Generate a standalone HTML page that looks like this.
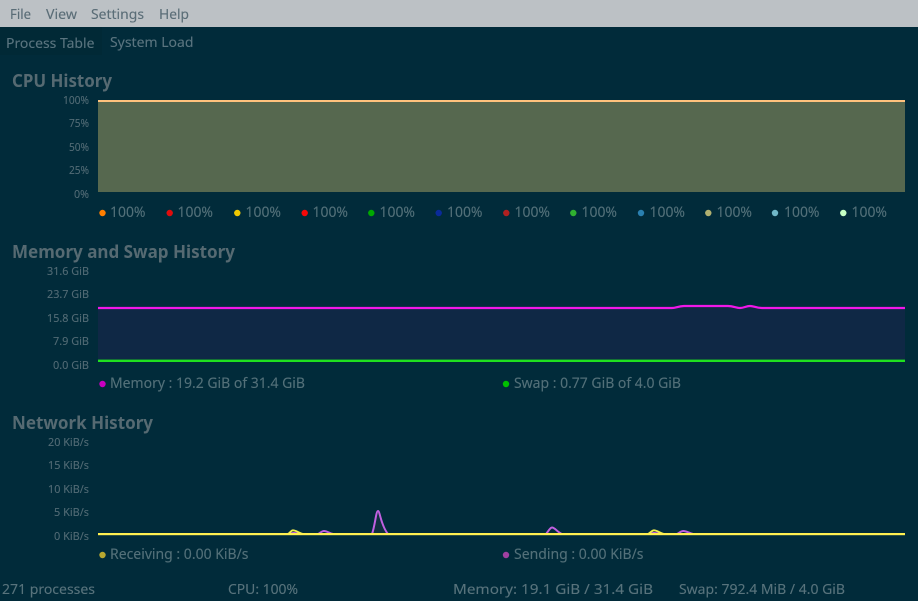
<!DOCTYPE html>
<html lang="en">
<head>
<meta charset="utf-8">
<title>System Load</title>
<style>
html,body{margin:0;padding:0;width:918px;height:601px;overflow:hidden;background:#012b3a}
svg{display:block;position:absolute;left:0;top:0}
text{font-family:"Noto Sans","DejaVu Sans","Liberation Sans",sans-serif;white-space:pre}
.m{font-size:14px;fill:#5a6d77;stroke:#5a6d77;stroke-width:.12}
.t{font-size:14px;fill:#5a747f;stroke:#5a747f;stroke-width:.12}
.h{font-size:18px;font-weight:bold;fill:#566a72}
.a{font-size:10.6px;fill:#526b75;stroke:#526b75;stroke-width:.1}
.l{font-size:14.1px;fill:#537079;stroke:#537079;stroke-width:.12}
.s{font-size:14px;fill:#58737c;stroke:#58737c;stroke-width:.12}
</style>
</head>
<body>
<svg width="918" height="601" viewBox="0 0 918 601" xmlns="http://www.w3.org/2000/svg">
<rect width="918" height="601" fill="#012b3a"/>
<rect width="918" height="27" fill="#bcc1c5"/>
<text class="m" x="10" y="19" textLength="21" lengthAdjust="spacingAndGlyphs">File</text>
<text class="m" x="46" y="19" textLength="31" lengthAdjust="spacingAndGlyphs">View</text>
<text class="m" x="91" y="19" textLength="53" lengthAdjust="spacingAndGlyphs">Settings</text>
<text class="m" x="159" y="19" textLength="30" lengthAdjust="spacingAndGlyphs">Help</text>

<rect x="0" y="27" width="102" height="28" fill="#012936"/>
<text class="t" x="6" y="48" textLength="88.5" lengthAdjust="spacingAndGlyphs">Process Table</text>
<text class="t" x="110" y="47" textLength="83.5" lengthAdjust="spacingAndGlyphs">System Load</text>

<!-- CPU -->
<text class="h" x="12" y="87" textLength="100" lengthAdjust="spacingAndGlyphs">CPU History</text>
<text class="a" x="63" y="104" textLength="26" lengthAdjust="spacingAndGlyphs">100%</text>
<text class="a" x="69" y="127" textLength="20" lengthAdjust="spacingAndGlyphs">75%</text>
<text class="a" x="69" y="151" textLength="20" lengthAdjust="spacingAndGlyphs">50%</text>
<text class="a" x="69" y="174" textLength="20" lengthAdjust="spacingAndGlyphs">25%</text>
<text class="a" x="74" y="198" textLength="15" lengthAdjust="spacingAndGlyphs">0%</text>
<rect x="98" y="102" width="807" height="90" fill="#56684f"/>
<rect x="98" y="100" width="807" height="2" fill="#ffc27d"/>

<circle cx="102.5" cy="213" r="3.2" fill="#ff7f00"/><text class="l" x="110" y="217" textLength="35.5" lengthAdjust="spacingAndGlyphs">100%</text>
<circle cx="169.7" cy="213" r="3.2" fill="#e00c0c"/><text class="l" x="177.5" y="217" textLength="35.5" lengthAdjust="spacingAndGlyphs">100%</text>
<circle cx="237.3" cy="213" r="3.2" fill="#f0c800"/><text class="l" x="245.5" y="217" textLength="35.5" lengthAdjust="spacingAndGlyphs">100%</text>
<circle cx="304.7" cy="213" r="3.2" fill="#f80808"/><text class="l" x="312.5" y="217" textLength="35.5" lengthAdjust="spacingAndGlyphs">100%</text>
<circle cx="371.3" cy="213" r="3.2" fill="#00a800"/><text class="l" x="379.5" y="217" textLength="35.5" lengthAdjust="spacingAndGlyphs">100%</text>
<circle cx="438.7" cy="213" r="3.2" fill="#0a2a9a"/><text class="l" x="447" y="217" textLength="35.5" lengthAdjust="spacingAndGlyphs">100%</text>
<circle cx="506.3" cy="213" r="3.2" fill="#b02020"/><text class="l" x="514.5" y="217" textLength="35.5" lengthAdjust="spacingAndGlyphs">100%</text>
<circle cx="573.3" cy="213" r="3.2" fill="#30b030"/><text class="l" x="581.5" y="217" textLength="35.5" lengthAdjust="spacingAndGlyphs">100%</text>
<circle cx="641" cy="213" r="3.2" fill="#2a80b0"/><text class="l" x="649.5" y="217" textLength="35.5" lengthAdjust="spacingAndGlyphs">100%</text>
<circle cx="708.3" cy="213" r="3.2" fill="#b0b070"/><text class="l" x="716.5" y="217" textLength="35.5" lengthAdjust="spacingAndGlyphs">100%</text>
<circle cx="775" cy="213" r="3.2" fill="#70b8c8"/><text class="l" x="784" y="217" textLength="35.5" lengthAdjust="spacingAndGlyphs">100%</text>
<circle cx="843.3" cy="213" r="3.2" fill="#c4ffc4"/><text class="l" x="851.5" y="217" textLength="35.5" lengthAdjust="spacingAndGlyphs">100%</text>

<!-- Memory -->
<text class="h" x="12" y="258" textLength="223" lengthAdjust="spacingAndGlyphs">Memory and Swap History</text>
<text class="a" x="47" y="275" textLength="42" lengthAdjust="spacingAndGlyphs">31.6 GiB</text>
<text class="a" x="47" y="298" textLength="42" lengthAdjust="spacingAndGlyphs">23.7 GiB</text>
<text class="a" x="47" y="322" textLength="42" lengthAdjust="spacingAndGlyphs">15.8 GiB</text>
<text class="a" x="53" y="345" textLength="36" lengthAdjust="spacingAndGlyphs">7.9 GiB</text>
<text class="a" x="53" y="369" textLength="36" lengthAdjust="spacingAndGlyphs">0.0 GiB</text>
<path d="M98 308H672C676 308 678 306.2 684 306H728C733 306 736 308 740 308C744 308 746 306 750 306C754 306 756 308 762 308H905V360H98Z" fill="#0f2845"/>
<path d="M98 308H672C676 308 678 306.2 684 306H728C733 306 736 308 740 308C744 308 746 306 750 306C754 306 756 308 762 308H905" fill="none" stroke="#f018e8" stroke-width="2.2"/>
<rect x="98" y="359.6" width="807" height="2.4" fill="#1fe01f"/>
<circle cx="102.5" cy="384" r="3.2" fill="#c800c0"/>
<text class="l" x="110" y="388" textLength="195" lengthAdjust="spacingAndGlyphs">Memory : 19.2 GiB of 31.4 GiB</text>
<circle cx="506" cy="384" r="3.2" fill="#00c000"/>
<text class="l" x="514" y="388" textLength="167" lengthAdjust="spacingAndGlyphs">Swap : 0.77 GiB of 4.0 GiB</text>

<!-- Network -->
<text class="h" x="12" y="429" textLength="141" lengthAdjust="spacingAndGlyphs">Network History</text>
<text class="a" x="48" y="446" textLength="41" lengthAdjust="spacingAndGlyphs">20 KiB/s</text>
<text class="a" x="48" y="469" textLength="41" lengthAdjust="spacingAndGlyphs">15 KiB/s</text>
<text class="a" x="48" y="493" textLength="41" lengthAdjust="spacingAndGlyphs">10 KiB/s</text>
<text class="a" x="54" y="516" textLength="35" lengthAdjust="spacingAndGlyphs">5 KiB/s</text>
<text class="a" x="54" y="540" textLength="35" lengthAdjust="spacingAndGlyphs">0 KiB/s</text>
<path d="M372 534C375 526 376 511 378 511C380 511 381 526 388 534Z" fill="#10303f"/>
<g fill="none" stroke="#c060e0" stroke-width="2" stroke-linejoin="round">
<path d="M287 534C290 534 291 533 294 533C297 533 299 534 303 534"/>
<path d="M318 534C320 533 322 531 324 531C327 531 329 533 333 534"/>
<path d="M372 534C375 526 376 511 378 511C380 511 381 526 388 534"/>
<path d="M546 534C548 532 550 527.5 552 527.5C555 527.5 557 532 562 534"/>
<path d="M648 534C650 534 652 533 654 533C657 533 659 534 664 534"/>
<path d="M677 534C679 533 681 531 683.5 531C686 531 689 533 693 534"/>
</g>
<g fill="none" stroke="#f4ee50" stroke-width="1.8" stroke-linejoin="round">
<path d="M288 534C290 533 291 530.3 293 530.3C296 530.3 299 533 303 534"/>
<path d="M648 534C650 533 652 530.3 654 530.3C657 530.3 660 533 664 534"/>
</g>
<rect x="98" y="533" width="807" height="2.2" fill="#fff050"/>
<circle cx="102.5" cy="555" r="3.2" fill="#b8a830"/>
<text class="l" x="110" y="559" textLength="138.5" lengthAdjust="spacingAndGlyphs">Receiving : 0.00 KiB/s</text>
<circle cx="506" cy="555" r="3.2" fill="#a040a0"/>
<text class="l" x="514" y="559" textLength="129.5" lengthAdjust="spacingAndGlyphs">Sending : 0.00 KiB/s</text>

<!-- Status -->
<text class="s" x="2" y="594" textLength="93" lengthAdjust="spacingAndGlyphs">271 processes</text>
<text class="s" x="228" y="594" textLength="70" lengthAdjust="spacingAndGlyphs">CPU: 100%</text>
<text class="s" x="453" y="594" textLength="200" lengthAdjust="spacingAndGlyphs">Memory: 19.1 GiB / 31.4 GiB</text>
<text class="s" x="679" y="594" textLength="166" lengthAdjust="spacingAndGlyphs">Swap: 792.4 MiB / 4.0 GiB</text>
</svg>
</body>
</html>
